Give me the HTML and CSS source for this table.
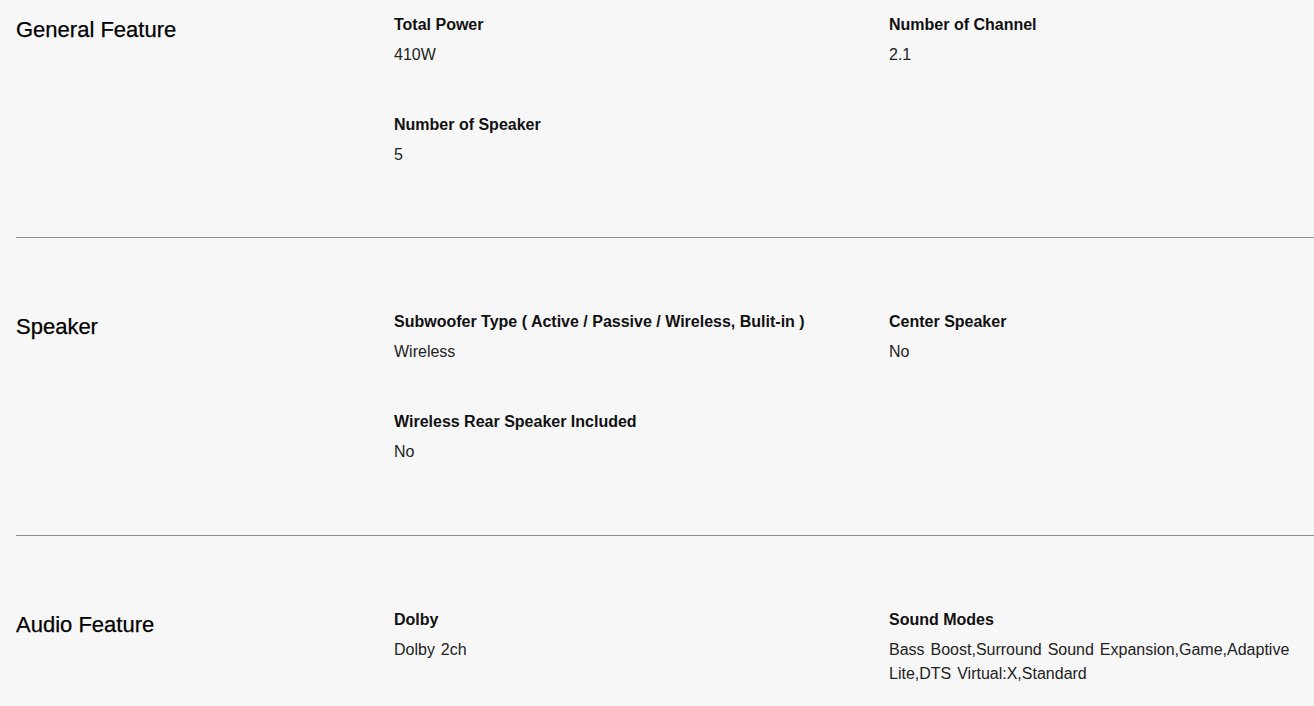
FILE: index.html
```html
<!DOCTYPE html>
<html lang="en">
<head>
<meta charset="utf-8">
<title>Specs</title>
<link rel="stylesheet" href="styles.css">
</head>
<body>
<div class="specs">
  <section class="spec-section first">
    <h2 class="spec-title">General Feature</h2>
    <dl class="spec-grid">
      <div class="spec-item"><dt>Total Power</dt><dd>410W</dd></div>
      <div class="spec-item"><dt>Number of Channel</dt><dd>2.1</dd></div>
      <div class="spec-item"><dt>Number of Speaker</dt><dd>5</dd></div>
    </dl>
  </section>
  <section class="spec-section">
    <h2 class="spec-title">Speaker</h2>
    <dl class="spec-grid">
      <div class="spec-item"><dt>Subwoofer Type ( Active / Passive / Wireless, Bulit-in )</dt><dd>Wireless</dd></div>
      <div class="spec-item"><dt>Center Speaker</dt><dd>No</dd></div>
      <div class="spec-item"><dt>Wireless Rear Speaker Included</dt><dd>No</dd></div>
    </dl>
  </section>
  <section class="spec-section">
    <h2 class="spec-title">Audio Feature</h2>
    <dl class="spec-grid">
      <div class="spec-item"><dt>Dolby</dt><dd>Dolby 2ch</dd></div>
      <div class="spec-item"><dt>Sound Modes</dt><dd>Bass Boost,Surround Sound Expansion,Game,Adaptive Lite,DTS Virtual:X,Standard</dd></div>
    </dl>
  </section>
</div>
</body>
</html>
```
FILE: styles.css
```css
html, body {
  margin: 0;
  padding: 0;
  background: #f7f7f7;
}
body {
  font-family: "Liberation Sans", Arial, sans-serif;
  color: #111;
  overflow: hidden;
}
.specs {
  padding-left: 16px;
  width: 1424px;
}
.spec-section {
  display: flex;
  padding: 72px 0 71px;
  border-bottom: 1px solid #8f8f8f;
}
.spec-section.first {
  padding-top: 13px;
  padding-bottom: 70px;
}
.spec-title {
  flex: 0 0 378px;
  margin: 0;
  font-size: 22px;
  line-height: 34px;
  font-weight: 400;
  color: #000;
  -webkit-text-stroke: 0.25px #000;
}
.spec-grid {
  flex: 1;
  margin: 0;
  display: grid;
  grid-template-columns: 495px 418px;
  row-gap: 46px;
  align-content: start;
}
.spec-item dt {
  font-size: 16px;
  line-height: 24px;
  font-weight: 700;
  color: #111;
}
.spec-item dd {
  margin: 6px 0 0;
  font-size: 16px;
  line-height: 24px;
  color: #222;
  word-spacing: 1.5px;
}
```
